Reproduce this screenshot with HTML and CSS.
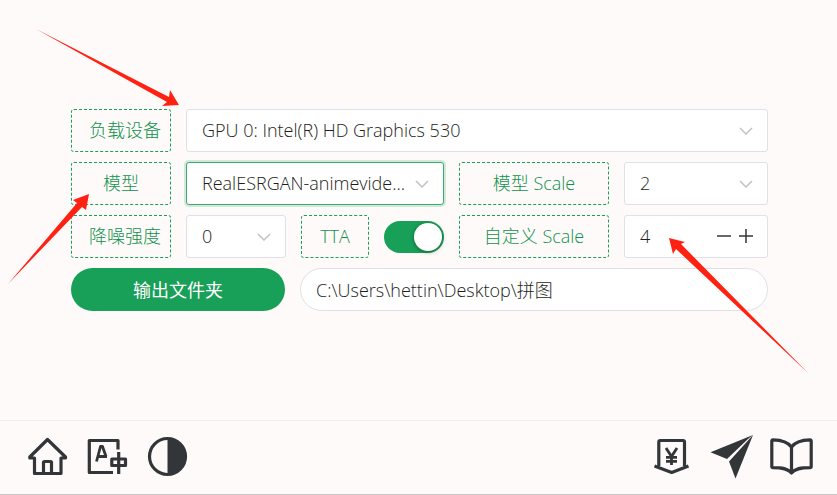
FILE: index.html
```html
<!DOCTYPE html>
<html lang="zh-CN">
<head>
  <meta charset="UTF-8">
  <title>RealESRGAN</title>
  <link rel="stylesheet" href="styles.css">
</head>
<body>
  <main class="settings">
    <div class="row">
      <label class="tag" for="device">负载设备</label>
      <select class="field" id="device">
        <option>GPU 0: Intel(R) HD Graphics 530</option>
      </select>
    </div>
    <div class="row">
      <label class="tag" for="model">模型</label>
      <select class="field active" id="model">
        <option>RealESRGAN-animevide...</option>
      </select>
      <label class="tag wide" for="modelScale">模型 Scale</label>
      <select class="field scale" id="modelScale">
        <option>2</option>
        <option>3</option>
        <option>4</option>
      </select>
    </div>
    <div class="row">
      <label class="tag" for="denoise">降噪强度</label>
      <select class="field" id="denoise">
        <option>0</option>
        <option>1</option>
        <option>2</option>
        <option>3</option>
      </select>
      <label class="tag small" for="tta">TTA</label>
      <input class="switch" type="checkbox" id="tta" checked>
      <label class="tag wide" for="customScale">自定义 Scale</label>
      <div class="field scale stepper">
        <input type="number" id="customScale" value="4" min="1">
        <button type="button" aria-label="减少" onclick="customScale.stepDown()">
          <svg viewBox="0 0 16 16"><path d="M1 8H15"/></svg>
        </button>
        <button type="button" aria-label="增加" onclick="customScale.stepUp()">
          <svg viewBox="0 0 16 16"><path d="M1 8H15M8 1V15"/></svg>
        </button>
      </div>
    </div>
    <div class="row">
      <button class="folder-btn" type="button">输出文件夹</button>
      <input class="field path" type="text" aria-label="输出文件夹" value="C:\Users\hettin\Desktop\拼图">
    </div>
  </main>

  <footer class="toolbar">
    <nav class="group">
      <a href="#home" aria-label="主页">
        <svg class="icon" viewBox="0 0 40 40">
          <path d="M20.500 2.500L2.800 20V21H7.500V36.500H34V21H38.500V20Z"/>
          <path d="M16.500 36.500V25.500Q16.500 24.500 17.500 24.500H23.500Q24.500 24.500 24.500 25.500V36.500"/>
        </svg>
      </a>
      <button type="button" aria-label="语言">
        <svg class="icon" viewBox="0 0 40 40">
          <path d="M31 12.500V3.500H2.300V35.500H26"/>
          <path class="thin" d="M9.500 24.500L13.500 9.500H15.500L19 19.500M10.500 19.500H20"/>
          <path d="M24.800 22H38.500V28.500H24.800ZM31.700 15V37"/>
        </svg>
      </button>
      <button type="button" aria-label="主题">
        <svg class="icon" viewBox="0 0 40 40">
          <circle cx="20.500" cy="19.500" r="18"/>
          <path class="solid" d="M20.500 1.500A18 18 0 0 1 20.500 37.500Z"/>
        </svg>
      </button>
    </nav>
    <nav class="group">
      <a href="#donate" aria-label="捐赠">
        <svg class="icon" viewBox="0 0 40 40">
          <path d="M7.800 29V5Q7.800 3.500 9.300 3.500H32Q33.500 3.500 33.500 5V29"/>
          <path d="M3.500 29L20.700 35.500L37.500 29"/>
          <path class="thin" d="M15 11L20.500 19.500L26 11M20.500 19V28M15 20.300H26M15 24.300H26"/>
        </svg>
      </a>
      <a href="#send" aria-label="发布">
        <svg class="icon" viewBox="0 0 40 40">
          <path class="solid" d="M42-2L-0.500 15.300L16 22L37 2Z"/>
          <path class="solid" d="M42-2L18 24.500L24.500 41.500Z"/>
        </svg>
      </a>
      <a href="#docs" aria-label="文档">
        <svg class="icon" viewBox="0 0 40 40">
          <path d="M20.500 10C17 5 11 3 2 2.800Q0.800 2.800 0.800 4V29.500Q0.800 30.700 2 30.700C11 30.700 17 31.500 20.500 36C24 31.500 30 30.700 39 30.700Q40.200 30.700 40.200 29.500V4Q40.200 2.800 39 2.800C30 3 24 5 20.500 10V36"/>
        </svg>
      </a>
    </nav>
  </footer>

  <!-- hint arrows -->
  <svg class="arrows" viewBox="0 0 837 420" aria-hidden="true">
    <path d="M36 29L169 97L170 90L179 105L162 106L167 102Z"/>
    <path d="M8 284L77 203L73 200L89 194L86 210L82 207Z"/>
    <path d="M808 373L681 244L685 242L669 238L673 254L676 249Z"/>
  </svg>
</body>
</html>
```
FILE: styles.css
```css
* {
  box-sizing: border-box;
}
body {
  margin: 0;
  min-height: 100vh;
  display: flex;
  flex-direction: column;
  background: #fffafa;
  color: #1c1e20;
  font-family: "Open Sans", "Noto Sans CJK SC", sans-serif;
  font-size: 18px;
  font-weight: 300;
  border-bottom: 1px solid #c8c6c6;
}
button, input, select {
  font: inherit;
  color: inherit;
}
.settings {
  flex: 1;
  display: flex;
  flex-direction: column;
  gap: 10px;
  padding: 109px 69px 10px 71px;
}
.row {
  display: flex;
  align-items: center;
  gap: 15px;
}
.tag {
  flex: none;
  width: 100px;
  height: 43px;
  padding: 0 17px;
  border: 1px dashed #18a058;
  border-radius: 3px;
  color: #0c924b;
  line-height: 40px;
  text-align: center;
  white-space: nowrap;
}
.tag.wide {
  width: 150px;
}
.tag.small {
  width: 68px;
}
.field {
  flex: 1;
  min-width: 0;
  height: 43px;
  padding: 0 15px 2px;
  border: 1px solid #e0e0e6;
  border-radius: 3px;
  background: #fff;
  outline: none;
}
select.field {
  appearance: none;
  padding-right: 30px;
  background: #fff url("data:image/svg+xml,%3Csvg xmlns='http://www.w3.org/2000/svg' width='14' height='8' fill='none' stroke='%23c2c2c2' stroke-width='1.500'%3E%3Cpath d='M1 1L7 7L13 1'/%3E%3C/svg%3E") no-repeat right 14px center;
}
.field.active {
  border-color: #36ad6a;
  box-shadow: 0 0 0 2px rgba(24, 160, 88, 0.2);
}
.field.scale {
  flex: none;
  width: 144px;
}
.switch {
  appearance: none;
  flex: none;
  width: 60px;
  height: 32px;
  margin: 0;
  padding: 2px;
  display: flex;
  border-radius: 16px;
  background: #b9b7b7;
}
.switch::before {
  content: "";
  width: 28px;
  height: 28px;
  border-radius: 50%;
  background: #fff;
  box-shadow: 0 1px 4px rgba(0, 0, 0, 0.4);
}
.switch:checked {
  justify-content: flex-end;
  background: #18a058;
}
.stepper {
  display: flex;
  align-items: center;
  gap: 6px;
  padding-right: 13px;
}
.stepper input {
  flex: 1;
  min-width: 0;
  padding: 0;
  border: none;
  outline: none;
  background: none;
  appearance: textfield;
}
.stepper input::-webkit-inner-spin-button {
  appearance: none;
}
.stepper button {
  width: 16px;
  height: 16px;
  padding: 0;
  border: none;
  background: none;
}
.stepper svg {
  display: block;
  stroke: #333639;
  stroke-width: 1.5;
}
.folder-btn {
  flex: none;
  width: 214px;
  height: 43px;
  padding: 0 0 2px;
  border: none;
  border-radius: 22px;
  background: #18a058;
  color: #fff;
  font-weight: 400;
}
.path {
  border-radius: 22px;
}
.toolbar {
  display: flex;
  justify-content: space-between;
  padding: 16px 26px 17px 27px;
  border-top: 1px solid #efeff5;
}
.group {
  display: flex;
  gap: 20px;
}
.group a, .group button {
  width: 40px;
  height: 40px;
  padding: 0;
  border: none;
  background: none;
  color: #333639;
}
.icon {
  display: block;
  overflow: visible;
  fill: none;
  stroke: currentColor;
  stroke-width: 3.2;
  stroke-linejoin: round;
}
.icon .thin {
  stroke-width: 2.8;
}
.icon .solid {
  fill: currentColor;
  stroke: none;
}
.arrows {
  position: absolute;
  top: 0;
  left: 0;
  width: 837px;
  height: 420px;
  fill: #ff2212;
  pointer-events: none;
}
```
